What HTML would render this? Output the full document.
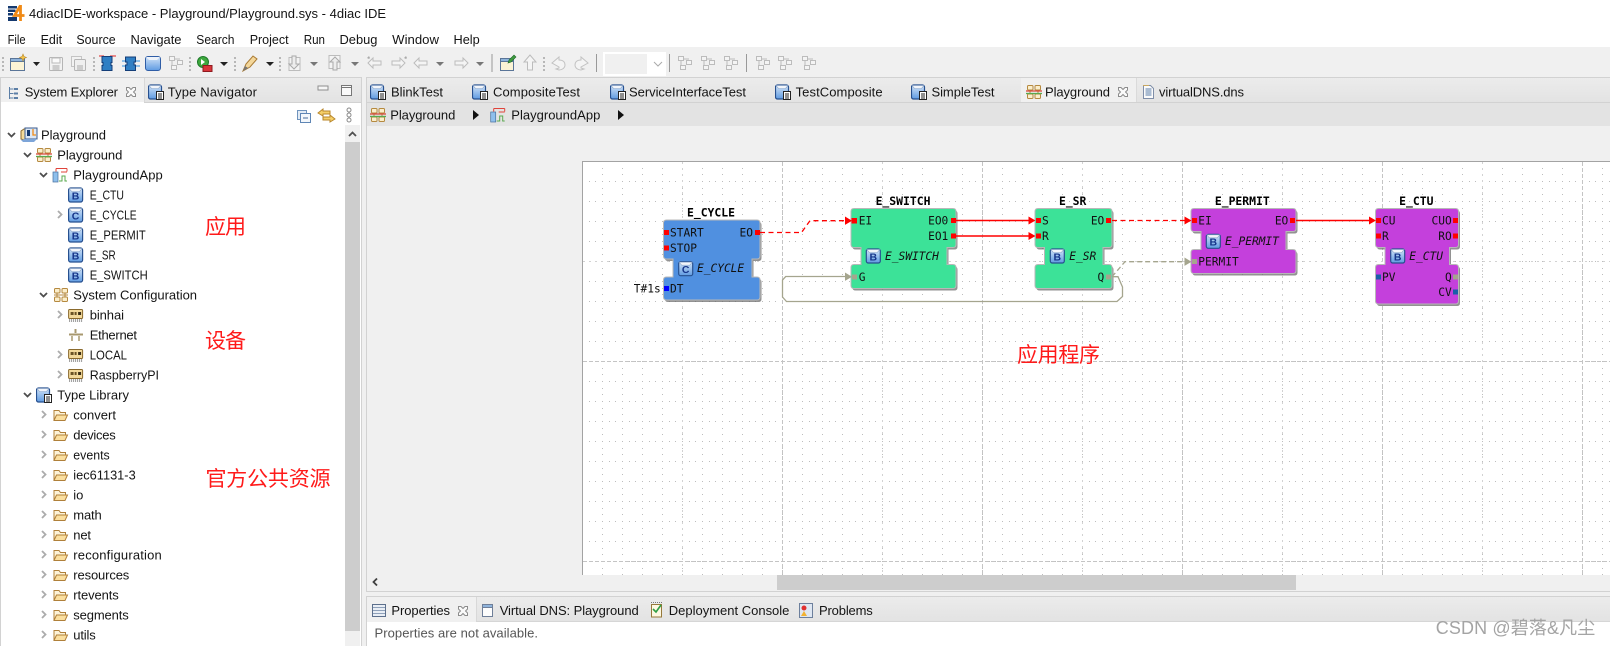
<!DOCTYPE html>
<html lang="en"><head><meta charset="utf-8"><title>4diacIDE</title>
<style>
html,body{margin:0;padding:0;background:#fff;width:1610px;height:646px;overflow:hidden}
svg{display:block}
.t{font:13px "Liberation Sans","Noto Sans CJK SC",sans-serif;fill:#141414}
.m{font:11.2px "DejaVu Sans Mono","Liberation Mono",monospace;fill:#111}
.mb{font:bold 11.4px "DejaVu Sans Mono","Liberation Mono",monospace;fill:#000;text-anchor:middle}
.mi{font:italic 11.2px "DejaVu Sans Mono","Liberation Mono",monospace;fill:#111}
.r{font:21px "Noto Sans CJK SC","Liberation Sans",sans-serif;fill:#ff1a1a}
.l{font:bold 10.5px "Liberation Sans",sans-serif;fill:#16358a;text-anchor:middle}
</style></head><body>
<svg width="1610" height="646" viewBox="0 0 1610 646" xmlns="http://www.w3.org/2000/svg">
<defs>
<linearGradient id="gb" x1="0" y1="0" x2="0" y2="1"><stop offset="0" stop-color="#d4e5f8"/><stop offset="1" stop-color="#5f9be2"/></linearGradient>
<linearGradient id="tabs" x1="0" y1="0" x2="0" y2="1"><stop offset="0" stop-color="#ececec"/><stop offset="1" stop-color="#e3e3e3"/></linearGradient>
<pattern id="grid" patternUnits="userSpaceOnUse" x="582" y="161" width="20" height="20">
<g fill="#bdbdbd"><rect x="0" y="0" width="1" height="1"/><rect x="0" y="7" width="1" height="1"/><rect x="0" y="13" width="1" height="1"/><rect x="7" y="0" width="1" height="1"/><rect x="13" y="0" width="1" height="1"/></g>
</pattern>
<symbol id="fb" viewBox="0 0 16 16" width="16" height="16"><rect x="1" y="1" width="14" height="14" rx="2" fill="url(#gb)" stroke="#27508f" stroke-width="1.2"/><path d="M1.5 1.500h13l-2.500 3H4z" fill="#f2f5fa" stroke="#8ea7c9" stroke-width=".6"/></symbol>
<symbol id="type" viewBox="0 0 16 16" width="16" height="16"><rect x=".5" y="1" width="13" height="14" rx="2" fill="url(#gb)" stroke="#27508f" stroke-width="1.2"/><path d="M1 1.500h12l-2.500 3h-7z" fill="#f2f5fa" stroke="#8ea7c9" stroke-width=".6"/><rect x="8.500" y="7.500" width="7" height="8" fill="#fff" stroke="#222"/><path d="M10 10h4M10 12h4M10 14h4" stroke="#222"/></symbol>
<symbol id="sys" viewBox="0 0 16 16" width="16" height="16"><g fill="#fbeecb" stroke="#b5893f"><rect x="1.500" y="1.500" width="5.500" height="4.500" rx="1"/><rect x="9" y="1.500" width="5.500" height="4.500" rx="1"/><rect x="1.500" y="10" width="5.500" height="4.500" rx="1"/><rect x="9" y="10" width="5.500" height="4.500" rx="1"/></g><path d="M4 6v4M12 6v4M1 8h14" stroke="#b5893f"/></symbol>
<symbol id="pg" viewBox="0 0 16 16" width="16" height="16"><g fill="#fbeecb" stroke="#b5893f"><rect x="1.500" y="1.500" width="5.500" height="4.500" rx="1"/><rect x="9" y="1.500" width="5.500" height="4.500" rx="1"/><rect x="1.500" y="10" width="5.500" height="4.500" rx="1"/><rect x="9" y="10" width="5.500" height="4.500" rx="1"/></g><path d="M4 6v4M12 6v4" stroke="#b5893f"/><path d="M0 7h16" stroke="#d94a3a" stroke-width="1.300"/><path d="M0 9.500h16" stroke="#5aa84e" stroke-width="1.300"/></symbol>
<symbol id="app" viewBox="0 0 16 16" width="16" height="16"><rect x="1" y="5" width="5" height="10" fill="#8fbfec" stroke="#46709f" stroke-width=".7"/><path d="M4 1.500h11M4 1.500v3M15 1.500v3M9 5h6" stroke="#e0433a" fill="none"/><path d="M7 14h3v-5h3v5h2" stroke="#5aa84e" fill="none"/></symbol>
<symbol id="dev" viewBox="0 0 16 16" width="16" height="16"><rect x="1" y="2.500" width="14" height="9" rx="1" fill="#f3d99b" stroke="#8a6a2d"/><rect x="3" y="5" width="3" height="3" fill="#6a5224"/><rect x="7" y="5" width="2" height="3" fill="#6a5224"/><rect x="10.500" y="5" width="3" height="3" fill="#3a2e14"/><path d="M2 12v3M4 12v3M6 12v3M8 12v3M10 12v3M12 12v3M14 12v3" stroke="#999"/></symbol>
<symbol id="folder" viewBox="0 0 16 16" width="16" height="16"><path d="M1.500 13V3.500h5l1.500 2h5V8" fill="#fdf3d8" stroke="#b0803a"/><path d="M1.500 13.500L4 8h11l-2.500 5.500z" fill="#fbdf9f" stroke="#b0803a"/></symbol>
<symbol id="x" viewBox="0 0 12 12" width="12" height="12"><path d="M1.500 1.500h2.500L6 3.500l2-2h2.500v2.500L8.500 6l2 2v2.500H8L6 8.500l-2 2H1.500V8l2-2-2-2z" fill="#fafafa" stroke="#8c8c8c"/></symbol>
<symbol id="grip" viewBox="0 0 3 16" width="3" height="16"><g fill="#b7b7b7"><rect width="2" height="2" y="1"/><rect width="2" height="2" y="5"/><rect width="2" height="2" y="9"/><rect width="2" height="2" y="13"/></g></symbol>
<symbol id="dis1" viewBox="0 0 16 16" width="16" height="16"><g fill="#f4f4f4" stroke="#bcbcbc"><rect x="1.500" y="1.500" width="5" height="4"/><rect x="9.500" y="5.500" width="5" height="4"/><rect x="3.500" y="10.500" width="5" height="4"/></g><path d="M7 4h5M4 6v4" stroke="#bcbcbc"/></symbol>
<symbol id="dis2" viewBox="0 0 16 16" width="16" height="16"><path d="M1 8l5-5v3h8v4H6v3z" fill="#f4f4f4" stroke="#bcbcbc"/></symbol>
<symbol id="dis3" viewBox="0 0 16 16" width="16" height="16"><path d="M15 8l-5-5v3H2v4h8v3z" fill="#f4f4f4" stroke="#bcbcbc"/></symbol>
<symbol id="dis4" viewBox="0 0 16 16" width="16" height="16"><rect x="2" y="2.500" width="11" height="13" fill="#f4f4f4" stroke="#bcbcbc"/><path d="M5 1v8H2l5 5 5-5H9V1z" fill="#ededed" stroke="#a9a9a9"/></symbol>
</defs>

<rect width="1610" height="646" fill="#f0f0f0"/>
<rect width="1610" height="47" fill="#fff"/>

<!-- title -->
<g fill="#14396f"><rect x="8" y="6" width="9" height="2.500"/><rect x="8" y="9.500" width="7.500" height="2.500"/><rect x="8" y="13" width="5" height="2.500"/><rect x="8" y="17" width="9" height="4"/></g>
<path d="M20.500 5.500L14.500 15.500H24.500M20.500 5V21" fill="none" stroke="#f08a16" stroke-width="2.800"/>
<text class="t" x="29" y="18" textLength="357">4diacIDE-workspace - Playground/Playground.sys - 4diac IDE</text>

<!-- menu -->
<g>
<text class="t" x="7.600" y="44" textLength="18" lengthAdjust="spacingAndGlyphs">File</text>
<text class="t" x="40.600" y="44" textLength="21.500" lengthAdjust="spacingAndGlyphs">Edit</text>
<text class="t" x="76.400" y="44" textLength="39.300" lengthAdjust="spacingAndGlyphs">Source</text>
<text class="t" x="130.500" y="44" textLength="51" lengthAdjust="spacingAndGlyphs">Navigate</text>
<text class="t" x="196.300" y="44" textLength="38.200" lengthAdjust="spacingAndGlyphs">Search</text>
<text class="t" x="249.700" y="44" textLength="38.900" lengthAdjust="spacingAndGlyphs">Project</text>
<text class="t" x="303.700" y="44" textLength="21.300" lengthAdjust="spacingAndGlyphs">Run</text>
<text class="t" x="339.500" y="44" textLength="37.900" lengthAdjust="spacingAndGlyphs">Debug</text>
<text class="t" x="392.200" y="44" textLength="46.800" lengthAdjust="spacingAndGlyphs">Window</text>
<text class="t" x="453.500" y="44" textLength="26.200" lengthAdjust="spacingAndGlyphs">Help</text>
</g>

<!-- toolbar -->
<g>
<use href="#grip" x="2" y="56"/>
<rect x="10.500" y="58.500" width="14" height="12" fill="#fbf3d5" stroke="#5a7598"/><rect x="10.500" y="58.500" width="14" height="3" fill="#8fb4dc" stroke="#5a7598"/><path d="M23 54l1 2.500 2.500 1-2.500 1-1 2.500-1-2.500-2.500-1 2.500-1z" fill="#f6c64a" stroke="#b8892a" stroke-width=".6"/>
<path d="M33 62h7l-3.500 4z" fill="#222"/>
<rect x="49.500" y="57.500" width="13" height="13" rx="1" fill="#f2f2f2" stroke="#b5b5b5"/><rect x="52" y="58" width="8" height="5" fill="#fafafa" stroke="#bbb"/><rect x="52.500" y="65" width="7" height="5" fill="#ccc"/>
<rect x="71.500" y="56.500" width="10" height="10" fill="#f2f2f2" stroke="#c4c4c4"/><rect x="74.500" y="59.500" width="11" height="11" rx="1" fill="#efefef" stroke="#b5b5b5"/><rect x="77" y="65" width="6" height="5" fill="#ccc"/>
<use href="#grip" x="93" y="56"/>
<path d="M99 56h5M110 56h6" stroke="#e02020"/><path d="M102 56.500h10v6h-1v3h1v5h-10v-5h1v-3h-1z" fill="#2f7fc4" stroke="#143e78"/>
<path d="M122 61h4M122 66h4M135 61h5M135 66h5" stroke="#2a8ee0"/><path d="M125.500 57h10v5h-1.500v3h1.500v5.500h-10V65h1.500v-3h-1.500z" fill="#2f7fc4" stroke="#143e78"/>
<rect x="145.500" y="56.500" width="15" height="14" rx="2.500" fill="url(#gb)" stroke="#2f5da6"/><path d="M146 57h14l-3 3h-8z" fill="#eef3fa"/>
<use href="#dis1" x="168" y="55"/>
<use href="#grip" x="189" y="56"/>
<circle cx="203" cy="62" r="5.500" fill="#3ea83e" stroke="#1f7a2a"/><path d="M201 59l4 3-4 3z" fill="#fff"/><rect x="203" y="65.500" width="9" height="6" fill="#d8343a" stroke="#8f1a1f"/>
<path d="M220 62h8l-4 4z" fill="#222"/>
<use href="#grip" x="234" y="56"/>
<path d="M243 71l3-7 7-8 4 3-7 8z" fill="#f4d79a" stroke="#a97a33"/><path d="M243 71l2-5 3 2z" fill="#777"/>
<path d="M266 62h8l-4 4z" fill="#222"/>
<use href="#grip" x="279" y="56"/>
<use href="#dis4" x="287" y="55"/><path d="M310 62h8l-4 4z" fill="#777"/>
<use href="#dis4" x="326" y="55" transform="rotate(180 334 63)"/><path d="M351 62h8l-4 4z" fill="#777"/>
<use href="#dis2" x="367" y="55"/><path d="M367 58l2-2 1 2-1 1z" fill="#aaa"/>
<use href="#dis3" x="390" y="55"/><path d="M404 58l2-2 1 2-1 1z" fill="#aaa"/>
<use href="#dis2" x="413" y="55"/><path d="M436 62h8l-4 4z" fill="#777"/>
<use href="#dis3" x="453" y="55"/><path d="M476 62h8l-4 4z" fill="#777"/>
<rect x="491.500" y="54" width="1" height="18" fill="#999"/>
<rect x="500.500" y="58.500" width="13" height="12" fill="#fbf3d5" stroke="#5a7598"/><rect x="500.500" y="58.500" width="13" height="3" fill="#8fb4dc" stroke="#5a7598"/><path d="M509 60l5-5 2 2-5 5-3 1z" fill="#3f9a3f" stroke="#1f6a2a" stroke-width=".6"/>
<path d="M530 55l-6 7h3.500v8h5v-8h3.500z" fill="#f4f4f4" stroke="#bcbcbc"/>
<use href="#grip" x="543" y="56"/>
<path d="M552 63l7-6v3c5 0 6 3 6 5 0 3-3 5-6 5l-3-1 3-1v-1z" fill="#f4f4f4" stroke="#c2c2c2"/>
<path d="M588 63l-7-6v3c-5 0-6 3-6 5 0 3 3 5 6 5l3-1-3-1v-1z" fill="#f4f4f4" stroke="#c2c2c2"/>
<rect x="596" y="54" width="1" height="18" fill="#999"/>
<rect x="603" y="52" width="63" height="24" fill="#fff"/><rect x="605" y="54" width="42" height="20" fill="#f0f0f0"/>
<path d="M654 62l4 4 4-4" fill="none" stroke="#aaa"/>
<rect x="669" y="54" width="1" height="18" fill="#999"/>
<use href="#dis1" x="677" y="55"/><use href="#dis1" x="700" y="55"/><use href="#dis1" x="723" y="55"/>
<rect x="746" y="54" width="1" height="18" fill="#999"/>
<use href="#dis1" x="755" y="55"/><use href="#dis1" x="777" y="55"/><use href="#dis1" x="801" y="55"/>
</g>

<!-- left panel -->
<rect x="0" y="77" width="362" height="569" fill="#fff"/>
<rect x="0" y="77" width="362" height="25" fill="url(#tabs)"/>
<rect x="1" y="77" width="143" height="25" fill="#f0f0f0"/>
<rect x="0" y="77" width="362" height="1" fill="#d2d2d2"/>
<rect x="144" y="102" width="218" height="1" fill="#d2d2d2"/>
<rect x="144" y="78" width="1" height="24" fill="#d8d8d8"/>
<rect x="0" y="77" width="1" height="569" fill="#d2d2d2"/><rect x="361" y="77" width="1" height="569" fill="#d2d2d2"/>
<g fill="none" stroke="#5b7ea6"><path d="M9.500 87v12M9.500 89h4M9.500 93.500h4M9.500 98h4"/></g><g fill="#5b7ea6"><rect x="14" y="88" width="4" height="2"/><rect x="14" y="92.500" width="4" height="2"/><rect x="14" y="97" width="4" height="2"/></g>
<text class="t" x="24.800" y="96.500" textLength="93.200">System Explorer</text>
<use href="#x" x="125" y="86"/>
<use href="#type" x="148" y="84"/>
<text class="t" x="167.700" y="96.500" textLength="89.300">Type Navigator</text>
<rect x="318" y="86" width="10" height="4" fill="#f6f6f6" stroke="#8e8e8e"/>
<rect x="341.500" y="85.500" width="10" height="10" fill="#fafafa" stroke="#777"/><path d="M342 87.500h10" stroke="#777"/>
<rect x="297.500" y="110.500" width="9" height="9" fill="#e2ebf5" stroke="#6f93bd"/><rect x="300.500" y="113.500" width="10" height="9" fill="#f3f7fb" stroke="#5f86b5"/><path d="M303 118h5" stroke="#45689a"/>
<path d="M318 113l5-4v2h7v3h-7v2zM335 119l-5-4v2h-7v3h7v2z" fill="#f5cf6a" stroke="#b8862a"/>
<g fill="none" stroke="#8a8a8a"><circle cx="349" cy="110" r="2"/><circle cx="349" cy="115" r="2"/><circle cx="349" cy="120" r="2"/></g>

<!-- tree -->
<g fill="none" stroke="#4e4e4e" stroke-width="1.800">
<path d="M8 133l3.500 3.500 3.500-3.500M24 153l3.500 3.500 3.500-3.500M40 173l3.500 3.500 3.500-3.500M40 293l3.500 3.500 3.500-3.500M24 393l3.500 3.500 3.500-3.500"/>
</g>
<g fill="none" stroke="#acacac" stroke-width="1.800">
<path d="M58 211l3.500 3.500-3.500 3.500M58 311l3.500 3.500-3.500 3.500M58 351l3.500 3.500-3.500 3.500M58 371l3.500 3.500-3.500 3.500"/>
<path d="M42 411l3.500 3.500-3.500 3.500M42 431l3.500 3.500-3.500 3.500M42 451l3.500 3.500-3.500 3.500M42 471l3.500 3.500-3.500 3.500M42 491l3.500 3.500-3.500 3.500M42 511l3.500 3.500-3.500 3.500M42 531l3.500 3.500-3.500 3.500M42 551l3.500 3.500-3.500 3.500M42 571l3.500 3.500-3.500 3.500M42 591l3.500 3.500-3.500 3.500M42 611l3.500 3.500-3.500 3.500M42 631l3.500 3.500-3.500 3.500"/>
</g>
<path d="M21 131l3-2h9v11H24l-3-1z" fill="#f5dc9a" stroke="#8a6a2d"/><rect x="25" y="128" width="12" height="11" fill="#dce8f6" stroke="#3a5a8c"/><path d="M27 130h3v6h-3z" fill="#14396f"/><path d="M33 129v6h3" fill="none" stroke="#f08a16" stroke-width="1.300"/><path d="M21 140l4-1h12l-3 3H23z" fill="#7da5d8"/>
<use href="#pg" x="36" y="147"/>
<use href="#app" x="52" y="167"/>
<use href="#fb" x="67.600" y="187"/><text class="l" x="75.600" y="199.500">B</text>
<use href="#fb" x="67.600" y="207"/><text class="l" x="75.600" y="219.500">C</text>
<use href="#fb" x="67.600" y="227"/><text class="l" x="75.600" y="239.500">B</text>
<use href="#fb" x="67.600" y="247"/><text class="l" x="75.600" y="259.500">B</text>
<use href="#fb" x="67.600" y="267"/><text class="l" x="75.600" y="279.500">B</text>
<use href="#sys" x="53" y="287"/>
<use href="#dev" x="67.600" y="307"/>
<path d="M75.500 329v4M69 334.500h14" stroke="#a8986f" stroke-width="2" fill="none"/><path d="M72 336v5M79 336v5" stroke="#a8986f" stroke-width="1.500"/>
<use href="#dev" x="67.600" y="347"/>
<use href="#dev" x="67.600" y="367"/>
<use href="#type" x="36" y="387"/>
<use href="#folder" x="52.500" y="407"/><use href="#folder" x="52.500" y="427"/><use href="#folder" x="52.500" y="447"/><use href="#folder" x="52.500" y="467"/><use href="#folder" x="52.500" y="487"/><use href="#folder" x="52.500" y="507"/><use href="#folder" x="52.500" y="527"/><use href="#folder" x="52.500" y="547"/><use href="#folder" x="52.500" y="567"/><use href="#folder" x="52.500" y="587"/><use href="#folder" x="52.500" y="607"/><use href="#folder" x="52.500" y="627"/>
<g>
<text class="t" x="41" y="139.500" textLength="65">Playground</text>
<text class="t" x="57.300" y="159.500" textLength="65">Playground</text>
<text class="t" x="73.300" y="179.500" textLength="89.400">PlaygroundApp</text>
<text class="t" x="89.700" y="199.500" textLength="34.300" lengthAdjust="spacingAndGlyphs">E_CTU</text>
<text class="t" x="89.700" y="219.500" textLength="47" lengthAdjust="spacingAndGlyphs">E_CYCLE</text>
<text class="t" x="89.700" y="239.500" textLength="56" lengthAdjust="spacingAndGlyphs">E_PERMIT</text>
<text class="t" x="89.700" y="259.500" textLength="26" lengthAdjust="spacingAndGlyphs">E_SR</text>
<text class="t" x="89.700" y="279.500" textLength="58" lengthAdjust="spacingAndGlyphs">E_SWITCH</text>
<text class="t" x="73.300" y="299.500" textLength="123.700">System Configuration</text>
<text class="t" x="89.700" y="319.500" textLength="34.300">binhai</text>
<text class="t" x="89.700" y="339.500" textLength="47.300">Ethernet</text>
<text class="t" x="89.700" y="359.500" textLength="37.300" lengthAdjust="spacingAndGlyphs">LOCAL</text>
<text class="t" x="89.700" y="379.500" textLength="69.300" lengthAdjust="spacingAndGlyphs">RaspberryPI</text>
<text class="t" x="57.300" y="399.500" textLength="71.700">Type Library</text>
<text class="t" x="73.300" y="419.500" textLength="42.700">convert</text>
<text class="t" x="73.300" y="439.500" textLength="42.400">devices</text>
<text class="t" x="73.300" y="459.500" textLength="36.400" lengthAdjust="spacingAndGlyphs">events</text>
<text class="t" x="73.300" y="479.500" textLength="62.400" lengthAdjust="spacingAndGlyphs">iec61131-3</text>
<text class="t" x="73.300" y="499.500" textLength="10">io</text>
<text class="t" x="73.300" y="519.500" textLength="28.400">math</text>
<text class="t" x="73.300" y="539.500" textLength="17.700">net</text>
<text class="t" x="73.300" y="559.500" textLength="88.400">reconfiguration</text>
<text class="t" x="73.300" y="579.500" textLength="56">resources</text>
<text class="t" x="73.300" y="599.500" textLength="45.400">rtevents</text>
<text class="t" x="73.300" y="619.500" textLength="55.400">segments</text>
<text class="t" x="73.300" y="639.500" textLength="22.400">utils</text>
</g>
<!-- tree scrollbar -->
<rect x="345" y="125" width="15" height="521" fill="#f0f0f0"/>
<rect x="345" y="142" width="15" height="489" fill="#cdcdcd"/>
<path d="M349 136l3.500-3.500 3.500 3.500" fill="none" stroke="#505050" stroke-width="1.800"/>

<!-- red labels -->
<text class="r" x="205" y="234" textLength="41">应用</text>
<text class="r" x="205" y="348" textLength="41">设备</text>
<text class="r" x="205.500" y="486" textLength="125">官方公共资源</text>

<!-- editor -->
<rect x="366" y="77" width="1244" height="25" fill="url(#tabs)"/>
<rect x="366" y="77" width="1244" height="1" fill="#d2d2d2"/>
<rect x="366" y="102" width="1244" height="24" fill="#e3e3e3"/>
<rect x="366" y="102" width="1244" height="1" fill="#d2d2d2"/>
<rect x="1021" y="78" width="115" height="24" fill="#f0f0f0"/>
<rect x="1136" y="78" width="1" height="24" fill="#dadada"/>
<rect x="366" y="77" width="1" height="514" fill="#d2d2d2"/>
<use href="#type" x="370" y="84"/><text class="t" x="391" y="96.500" textLength="52">BlinkTest</text>
<use href="#type" x="472" y="84"/><text class="t" x="493" y="96.500" textLength="87">CompositeTest</text>
<use href="#type" x="610" y="84"/><text class="t" x="629" y="96.500" textLength="117">ServiceInterfaceTest</text>
<use href="#type" x="775" y="84"/><text class="t" x="795.600" y="96.500" textLength="87">TestComposite</text>
<use href="#type" x="911" y="84"/><text class="t" x="931.500" y="96.500" textLength="63">SimpleTest</text>
<use href="#pg" x="1026" y="84"/><text class="t" x="1045" y="96.500" textLength="65">Playground</text>
<use href="#x" x="1117" y="86"/>
<path d="M1143.500 85.500h7l3 3v10h-10z" fill="#fbfbfb" stroke="#7f8ea8"/><path d="M1145.500 89h6M1145.500 91h6M1145.500 93h6M1145.500 95h6" stroke="#5a7ca8"/><path d="M1143 85h6v1h-6z" fill="#c9a862"/>
<text class="t" x="1159" y="96.500" textLength="85">virtualDNS.dns</text>
<use href="#pg" x="370" y="107"/><text class="t" x="390.300" y="119.500" textLength="65">Playground</text>
<path d="M473 110l6 5-6 5z" fill="#111"/>
<use href="#app" x="489.700" y="107"/><text class="t" x="511.300" y="119.500" textLength="89">PlaygroundApp</text>
<path d="M618 110l6 5-6 5z" fill="#111"/>

<!-- canvas -->
<rect x="582" y="161" width="1028" height="414" fill="#fff"/>
<rect x="583" y="162" width="1027" height="413" fill="url(#grid)"/>
<g stroke="#c4c4c4" fill="none" stroke-dasharray="4 2">
<path d="M782.500 162V575M982.500 162V575M1182.500 162V575M1382.500 162V575M1582.500 162V575"/>
<path d="M583 361.500H1610M583 561.500H1610"/>
</g>
<g stroke="#d2d2d2" fill="none" stroke-dasharray="2 4">
<path d="M682.500 162V575M882.500 162V575M1082.500 162V575M1282.500 162V575M1482.500 162V575"/>
<path d="M583 261.500H1610"/>
</g>
<rect x="582" y="161" width="1028" height="1" fill="#a3a3a3"/>
<rect x="582" y="161" width="1" height="414" fill="#a3a3a3"/>

<!-- FB shadows -->
<g fill="#6e6e6e" opacity=".75" transform="translate(1.500 2)">
<path d="M666.500 220H757Q760 220 760 223V256Q760 259 757 259H752V277H757Q760 277 760 280V297Q760 300 757 300H666.500Q663.500 300 663.500 297V280Q663.500 277 666.500 277H673V259H666.500Q663.500 259 663.500 256V223Q663.500 220 666.500 220Z"/>
<path d="M854 208.500H953Q956 208.500 956 211.500V244.500Q956 247.500 953 247.500H947V264.500H953Q956 264.500 956 267.500V285.500Q956 288.500 953 288.500H854Q851 288.500 851 285.500V267.500Q851 264.500 854 264.500H861V247.500H854Q851 247.500 851 244.500V211.500Q851 208.500 854 208.500Z"/>
<path d="M1038 208.500H1109Q1112 208.500 1112 211.500V244.500Q1112 247.500 1109 247.500H1103V264.500H1109Q1112 264.500 1112 267.500V285.500Q1112 288.500 1109 288.500H1038Q1035 288.500 1035 285.500V267.500Q1035 264.500 1038 264.500H1044.500V247.500H1038Q1035 247.500 1035 244.500V211.500Q1035 208.500 1038 208.500Z"/>
<path d="M1194 208.500H1293Q1296 208.500 1296 211.500V228.500Q1296 231.500 1293 231.500H1286V249.500H1293Q1296 249.500 1296 252.500V270.500Q1296 273.500 1293 273.500H1194Q1191 273.500 1191 270.500V252.500Q1191 249.500 1194 249.500H1201V231.500H1194Q1191 231.500 1191 228.500V211.500Q1191 208.500 1194 208.500Z"/>
<path d="M1378.500 208.500H1455.500Q1458.500 208.500 1458.500 211.500V244.500Q1458.500 247.500 1455.500 247.500H1449.500V264.500H1455.500Q1458.500 264.500 1458.500 267.500V301Q1458.500 304 1455.500 304H1378.500Q1375.500 304 1375.500 301V267.500Q1375.500 264.500 1378.500 264.500H1385V247.500H1378.500Q1375.500 247.500 1375.500 244.500V211.500Q1375.500 208.500 1378.500 208.500Z"/>
</g>
<!-- FB bodies -->
<path fill="#5090e0" stroke="#b8b8b8" d="M666.500 220H757Q760 220 760 223V256Q760 259 757 259H752V277H757Q760 277 760 280V297Q760 300 757 300H666.500Q663.500 300 663.500 297V280Q663.500 277 666.500 277H673V259H666.500Q663.500 259 663.500 256V223Q663.500 220 666.500 220Z"/>
<path fill="#3ce298" stroke="#b8b8b8" d="M854 208.500H953Q956 208.500 956 211.500V244.500Q956 247.500 953 247.500H947V264.500H953Q956 264.500 956 267.500V285.500Q956 288.500 953 288.500H854Q851 288.500 851 285.500V267.500Q851 264.500 854 264.500H861V247.500H854Q851 247.500 851 244.500V211.500Q851 208.500 854 208.500Z"/>
<path fill="#3ce298" stroke="#b8b8b8" d="M1038 208.500H1109Q1112 208.500 1112 211.500V244.500Q1112 247.500 1109 247.500H1103V264.500H1109Q1112 264.500 1112 267.500V285.500Q1112 288.500 1109 288.500H1038Q1035 288.500 1035 285.500V267.500Q1035 264.500 1038 264.500H1044.500V247.500H1038Q1035 247.500 1035 244.500V211.500Q1035 208.500 1038 208.500Z"/>
<path fill="#c440dc" stroke="#b8b8b8" d="M1194 208.500H1293Q1296 208.500 1296 211.500V228.500Q1296 231.500 1293 231.500H1286V249.500H1293Q1296 249.500 1296 252.500V270.500Q1296 273.500 1293 273.500H1194Q1191 273.500 1191 270.500V252.500Q1191 249.500 1194 249.500H1201V231.500H1194Q1191 231.500 1191 228.500V211.500Q1191 208.500 1194 208.500Z"/>
<path fill="#c440dc" stroke="#b8b8b8" d="M1378.500 208.500H1455.500Q1458.500 208.500 1458.500 211.500V244.500Q1458.500 247.500 1455.500 247.500H1449.500V264.500H1455.500Q1458.500 264.500 1458.500 267.500V301Q1458.500 304 1455.500 304H1378.500Q1375.500 304 1375.500 301V267.500Q1375.500 264.500 1378.500 264.500H1385V247.500H1378.500Q1375.500 247.500 1375.500 244.500V211.500Q1375.500 208.500 1378.500 208.500Z"/>

<!-- connections -->
<g fill="none">
<path d="M760 232.500H801.500L810 220.700H846" stroke="#ff0000" stroke-width="1.300" stroke-dasharray="5 3.500"/>
<path d="M956 220.500H1030M956 236H1030M1296 220.500H1370" stroke="#ff0000" stroke-width="1.600"/>
<path d="M1112 220.500H1186" stroke="#ff0000" stroke-width="1.300" stroke-dasharray="5 3.500"/>
<path d="M1112 276.700H1118L1122.500 287V296.500L1117 301.500H786.500L782.500 297V280L785.700 276.500H846" stroke="#a5a58e" stroke-width="1.300"/>
<path d="M1112 276.700L1125 261.700H1186" stroke="#a5a58e" stroke-width="1.300" stroke-dasharray="5 3"/>
</g>
<g fill="#ff0000">
<path d="M845 216.500l7 4.200-7 4.200zM1028.500 216.500l7 4-7 4zM1028.500 232l7 4-7 4zM1184.500 216.500l7 4-7 4zM1369 216.500l7 4-7 4z"/>
<rect x="851.500" y="218" width="5.500" height="5.500"/><rect x="664" y="230" width="5" height="5"/><rect x="664" y="245.500" width="5" height="5"/><rect x="755" y="230" width="5" height="5"/>
<rect x="951" y="218" width="5" height="5"/><rect x="951" y="233.500" width="5" height="5"/>
<rect x="1036" y="218" width="5" height="5"/><rect x="1036" y="233.500" width="5" height="5"/><rect x="1106" y="218" width="5" height="5"/>
<rect x="1192" y="218" width="5" height="5"/><rect x="1290" y="218" width="5" height="5"/>
<rect x="1376" y="218" width="5" height="5"/><rect x="1376" y="233.500" width="5" height="5"/><rect x="1453" y="218" width="5" height="5"/><rect x="1453" y="233.500" width="5" height="5"/>
</g>
<g fill="#a5a58e">
<path d="M845 272.500l7 4.200-7 4.200zM1184.500 257.500l7 4.200-7 4.200z"/>
<rect x="852" y="274.500" width="5" height="5"/><rect x="1106" y="274.500" width="5" height="5"/><rect x="1192" y="259" width="5" height="5"/><rect x="1453" y="274.500" width="5" height="5"/>
</g>
<rect x="664" y="286" width="5" height="5" fill="#0000ff"/>
<rect x="1376" y="274.500" width="5" height="5" fill="#1a5fa8"/><rect x="1453" y="289.500" width="5" height="5" fill="#1a5fa8"/>

<!-- FB labels -->
<text class="mb" x="711" y="216.500">E_CYCLE</text>
<text class="mb" x="903" y="205">E_SWITCH</text>
<text class="mb" x="1072.700" y="205">E_SR</text>
<text class="mb" x="1242.300" y="205">E_PERMIT</text>
<text class="mb" x="1416.300" y="205">E_CTU</text>
<g class="m">
<text class="m" x="670" y="236.700">START</text><text class="m" x="670" y="252">STOP</text><text class="m" x="670" y="292.500">DT</text>
<text class="m" x="753" y="236.700" text-anchor="end">EO</text><text class="m" x="660.700" y="292.500" text-anchor="end">T#1s</text>
<text class="m" x="858.700" y="224.500">EI</text><text class="m" x="858.700" y="281">G</text>
<text class="m" x="948.300" y="224.500" text-anchor="end">EO0</text><text class="m" x="948.300" y="240" text-anchor="end">EO1</text>
<text class="m" x="1042" y="224.500">S</text><text class="m" x="1042" y="240">R</text>
<text class="m" x="1104.300" y="224.500" text-anchor="end">EO</text><text class="m" x="1104.300" y="281" text-anchor="end">Q</text>
<text class="m" x="1198.300" y="224.500">EI</text><text class="m" x="1198.300" y="265.500">PERMIT</text>
<text class="m" x="1288.300" y="224.500" text-anchor="end">EO</text>
<text class="m" x="1382" y="224.500">CU</text><text class="m" x="1382" y="240">R</text><text class="m" x="1382" y="281">PV</text>
<text class="m" x="1451.700" y="224.500" text-anchor="end">CUO</text><text class="m" x="1451.700" y="240" text-anchor="end">RO</text><text class="m" x="1451.700" y="281" text-anchor="end">Q</text><text class="m" x="1451.700" y="296" text-anchor="end">CV</text>
</g>
<use href="#fb" x="677.700" y="260.700"/><text class="l" x="685.700" y="273">C</text><text class="mi" x="697" y="272">E_CYCLE</text>
<use href="#fb" x="865.300" y="248"/><text class="l" x="873.300" y="260.300">B</text><text class="mi" x="885" y="260">E_SWITCH</text>
<use href="#fb" x="1049.300" y="248"/><text class="l" x="1057.300" y="260.300">B</text><text class="mi" x="1069.300" y="260">E_SR</text>
<use href="#fb" x="1205.300" y="233.300"/><text class="l" x="1213.300" y="245.600">B</text><text class="mi" x="1225" y="245">E_PERMIT</text>
<use href="#fb" x="1389.700" y="248"/><text class="l" x="1397.700" y="260.300">B</text><text class="mi" x="1409.300" y="260">E_CTU</text>

<text class="r" x="1017" y="362" textLength="83">应用程序</text>

<!-- h scrollbar -->
<rect x="367" y="575" width="1243" height="15" fill="#f0f0f0"/>
<rect x="777" y="575" width="519" height="15" fill="#cdcdcd"/>
<path d="M377 578.500l-3.500 3.500 3.500 3.500" fill="none" stroke="#404040" stroke-width="1.800"/>
<rect x="366" y="591" width="1244" height="1" fill="#d2d2d2"/>

<!-- bottom panel -->
<rect x="366" y="596" width="1244" height="25" fill="url(#tabs)"/>
<rect x="366" y="596" width="1244" height="1" fill="#d2d2d2"/>
<rect x="366" y="621" width="1244" height="1" fill="#d6d6d6"/>
<rect x="367" y="597" width="109" height="25" fill="#f0f0f0"/>
<rect x="476" y="597" width="1" height="24" fill="#d8d8d8"/>
<rect x="366" y="622" width="1244" height="24" fill="#fff"/>
<rect x="366" y="596" width="1" height="50" fill="#d2d2d2"/>
<rect x="372.500" y="604.500" width="13" height="12" fill="#e9eef5" stroke="#5c6f8c"/><path d="M373 607.500h12M373 610.500h12M373 613.500h12" stroke="#8fa1ba"/>
<text class="t" x="391.400" y="615" textLength="58.600">Properties</text>
<use href="#x" x="457" y="605"/>
<rect x="482.500" y="604.500" width="10" height="12" fill="#fdfdfd" stroke="#6f7f99"/><rect x="482.500" y="604.500" width="10" height="3" fill="#8fb4dc" stroke="#6f7f99"/>
<text class="t" x="499.700" y="615" textLength="139">Virtual DNS: Playground</text>
<rect x="651.500" y="604.500" width="10" height="12.500" fill="#fdf8e2" stroke="#96793a"/><path d="M651 602.500h11" stroke="#777" stroke-dasharray="1 1"/><path d="M653 609l3 3 5-7" fill="none" stroke="#2f9e44" stroke-width="1.600"/>
<text class="t" x="668.800" y="615" textLength="120.600">Deployment Console</text>
<rect x="799.500" y="603.500" width="13" height="14" fill="#dfe7f2" stroke="#6c7f9c"/><circle cx="804" cy="608" r="2.500" fill="#e03030"/><path d="M804 611l3 5h-6z" fill="#f2b233"/>
<text class="t" x="819" y="615" textLength="53.800">Problems</text>
<text class="t" style="fill:#555" x="374.500" y="637.500" textLength="163.500">Properties are not available.</text>

<!-- watermark -->
<text x="1435.700" y="634" textLength="159.500" style="font:18px 'Liberation Sans','Noto Sans CJK SC',sans-serif;fill:#a4a4a4">CSDN @碧落&amp;凡尘</text>
</svg>
</body></html>
